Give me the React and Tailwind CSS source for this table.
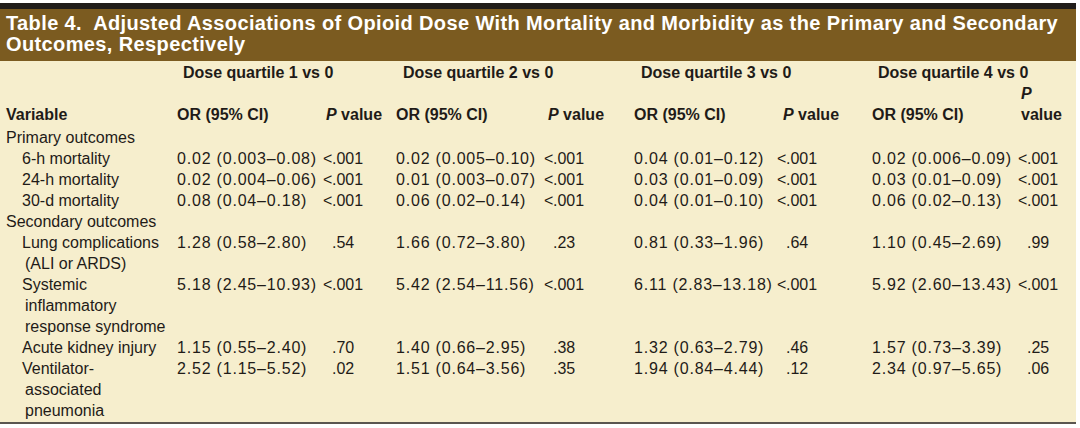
import React from "react";

const rows = [
  { section: "Primary outcomes" },
  {
    label: ["6-h mortality"],
    vals: [
      ["0.02 (0.003–0.08)", "<.001"],
      ["0.02 (0.005–0.10)", "<.001"],
      ["0.04 (0.01–0.12)", "<.001"],
      ["0.02 (0.006–0.09)", "<.001"],
    ],
  },
  {
    label: ["24-h mortality"],
    vals: [
      ["0.02 (0.004–0.06)", "<.001"],
      ["0.01 (0.003–0.07)", "<.001"],
      ["0.03 (0.01–0.09)", "<.001"],
      ["0.03 (0.01–0.09)", "<.001"],
    ],
  },
  {
    label: ["30-d mortality"],
    vals: [
      ["0.08 (0.04–0.18)", "<.001"],
      ["0.06 (0.02–0.14)", "<.001"],
      ["0.04 (0.01–0.10)", "<.001"],
      ["0.06 (0.02–0.13)", "<.001"],
    ],
  },
  { section: "Secondary outcomes" },
  {
    label: ["Lung complications", "(ALI or ARDS)"],
    vals: [
      ["1.28 (0.58–2.80)", ".54"],
      ["1.66 (0.72–3.80)", ".23"],
      ["0.81 (0.33–1.96)", ".64"],
      ["1.10 (0.45–2.69)", ".99"],
    ],
  },
  {
    label: ["Systemic", "inflammatory", "response syndrome"],
    vals: [
      ["5.18 (2.45–10.93)", "<.001"],
      ["5.42 (2.54–11.56)", "<.001"],
      ["6.11 (2.83–13.18)", "<.001"],
      ["5.92 (2.60–13.43)", "<.001"],
    ],
  },
  {
    label: ["Acute kidney injury"],
    vals: [
      ["1.15 (0.55–2.40)", ".70"],
      ["1.40 (0.66–2.95)", ".38"],
      ["1.32 (0.63–2.79)", ".46"],
      ["1.57 (0.73–3.39)", ".25"],
    ],
  },
  {
    label: ["Ventilator-", "associated", "pneumonia"],
    vals: [
      ["2.52 (1.15–5.52)", ".02"],
      ["1.51 (0.64–3.56)", ".35"],
      ["1.94 (0.84–4.44)", ".12"],
      ["2.34 (0.97–5.65)", ".06"],
    ],
  },
];

const GRID =
  "grid grid-cols-[171px_146px_73px_148px_90px_143px_95px_146px_1fr]";

function PVal({ v }) {
  const lt = v.startsWith("<");
  return (
    <div className="whitespace-nowrap">
      <span className="inline-block w-[9px] text-right">{lt ? "<" : ""}</span>
      {lt ? v.slice(1) : v}
    </div>
  );
}

export default function App() {
  return (
    <div
      className="w-[1080px] h-[428px] bg-white text-[#1f1b18] overflow-hidden"
      style={{ fontFamily: '"Liberation Sans", Arial, sans-serif' }}
    >
      <div className="w-[1076px] pt-[3px]">
        <div className="h-[6px] bg-[#211d1a]" />
        <div className="bg-[#7b5b20] text-white font-bold text-[20px] leading-[21px] pl-[6px] pt-[4px] pb-[6px] tracking-[0.38px]">
          <div className="whitespace-pre">
            {"Table 4.  Adjusted Associations of Opioid Dose With Mortality and Morbidity as the Primary and Secondary"}
          </div>
          <div>Outcomes, Respectively</div>
        </div>
        <div className="bg-[#f6eecd] pl-[6px] text-[16px] leading-[21px] border-b-2 border-[#5a5650]">
          {/* quartile header row */}
          <div className={`${GRID} font-bold pt-px`}>
            <div />
            <div className="col-span-2 pl-[6px]">Dose quartile 1 vs 0</div>
            <div className="col-span-2 pl-[7px]">Dose quartile 2 vs 0</div>
            <div className="col-span-2 pl-[7px]">Dose quartile 3 vs 0</div>
            <div className="col-span-2 pl-[6px]">Dose quartile 4 vs 0</div>
          </div>
          {/* column header row */}
          <div className={`${GRID} font-bold items-end`}>
            <div>Variable</div>
            <div>OR (95% CI)</div>
            <div className="pl-[3px]">
              <i>P</i> value
            </div>
            <div>OR (95% CI)</div>
            <div className="pl-[4px]">
              <i>P</i> value
            </div>
            <div>OR (95% CI)</div>
            <div className="pl-[6px]">
              <i>P</i> value
            </div>
            <div>OR (95% CI)</div>
            <div className="pl-[3px]">
              <div>
                <i>P</i>
              </div>
              <div>value</div>
            </div>
          </div>
          {/* body */}
          <div className="pt-[2px] pb-px">
            {rows.map((r, i) =>
              r.section ? (
                <div key={i}>{r.section}</div>
              ) : (
                <div key={i} className={GRID}>
                  <div>
                    {r.label.map((l, j) => (
                      <div
                        key={j}
                        className={j === 0 ? "pl-[16px]" : "pl-[19px]"}
                      >
                        {l}
                      </div>
                    ))}
                  </div>
                  {r.vals.map(([or, p], k) => (
                    <React.Fragment key={k}>
                      <div className="whitespace-nowrap tracking-[0.8px]">{or}</div>
                      <PVal v={p} />
                    </React.Fragment>
                  ))}
                </div>
              )
            )}
          </div>
        </div>
      </div>
    </div>
  );
}
